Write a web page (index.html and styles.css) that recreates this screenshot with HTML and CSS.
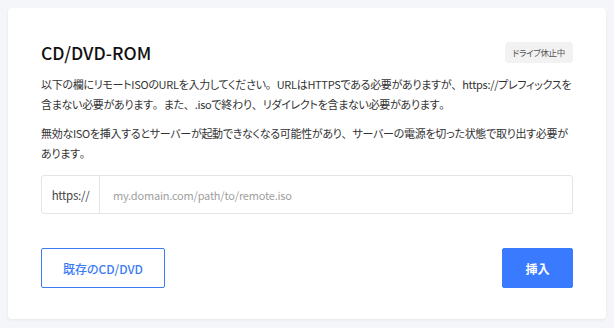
FILE: index.html
```html
<!DOCTYPE html>
<html lang="ja">
<head>
<meta charset="utf-8">
<link rel="stylesheet" href="styles.css">
</head>
<body>
<div class="card">
  <div class="header">
    <h2 class="title">CD/DVD-ROM</h2>
    <span class="badge">ドライブ休止中</span>
  </div>
  <p class="text">以下の欄にリモートISOのURLを入力してください<span class="fw">。</span>URLはHTTPSである必要がありますが<span class="fw">、</span>https://プレフィックスを含まない必要があります<span class="fw">。</span>また<span class="fw">、</span>.isoで終わり<span class="fw">、</span>リダイレクトを含まない必要があります<span class="fw">。</span></p>
  <p class="text">無効なISOを挿入するとサーバーが起動できなくなる可能性があり<span class="fw">、</span>サーバーの電源を切った状態で取り出す必要があります<span class="fw">。</span></p>
  <div class="input-group">
    <span class="prefix">https://</span>
    <input class="input" type="text" placeholder="my.domain.com/path/to/remote.iso">
  </div>
  <div class="actions">
    <button class="btn btn-outline">既存のCD/DVD</button>
    <button class="btn btn-primary">挿入</button>
  </div>
</div>
</body>
</html>
```
FILE: styles.css
```css
* { box-sizing: border-box; }
html, body { margin: 0; }
body {
  background: #f5f6fa;
  padding: 8px;
  font-family: "Noto Sans CJK JP", "Noto Sans", sans-serif;
  font-feature-settings: "palt";
  color: #222;
}
.card {
  background: #fff;
  border-radius: 4px;
  box-shadow: 0 1px 3px rgba(0,0,0,0.07);
  padding: 33px 33px 32px 33px;
  height: 311px;
}
.header {
  display: flex;
  justify-content: space-between;
  align-items: center;
  height: 22px;
  margin-bottom: 12px;
}
.title {
  margin: 0;
  font-size: 17.5px;
  font-weight: 500;
  color: #111;
  letter-spacing: 0;
}
.badge {
  background: #f2f2f2;
  color: #555;
  font-size: 8.5px;
  border-radius: 4px;
  padding: 0 8px;
  height: 21px;
  line-height: 21px;
  letter-spacing: -0.3px;
}
.text {
  margin: 0 0 10px 0;
  font-size: 11px;
  line-height: 19.5px;
  color: #333;
  letter-spacing: -0.3px;
}
.fw { font-feature-settings: normal; letter-spacing: 0; }
.input-group {
  display: flex;
  height: 39px;
  border: 1px solid #e4e4e4;
  border-radius: 3px;
  margin-top: 12px;
}
.prefix {
  width: 58px;
  border-right: 1px solid #e4e4e4;
  display: flex;
  align-items: center;
  justify-content: center;
  font-size: 11.5px;
  color: #444;
  letter-spacing: -0.3px;
}
.input {
  flex: 1;
  border: 0;
  outline: 0;
  padding: 0 13px;
  font-family: inherit;
  font-size: 11px;
  color: #333;
  background: transparent;
  letter-spacing: -0.2px;
}
.input::placeholder { color: #a0a0a0; }
.actions {
  display: flex;
  justify-content: space-between;
  margin-top: 34px;
}
.btn {
  height: 40px;
  font-family: inherit;
  font-feature-settings: "palt";
  font-size: 12px;
  font-weight: 500;
  border-radius: 2px;
  cursor: pointer;
}
.btn-outline {
  width: 124px;
  background: #fff;
  border: 1px solid #3b7bf6;
  color: #3b7bf6;
}
.btn-primary {
  width: 71px;
  background: #3a7afe;
  border: 1px solid #3a7afe;
  color: #fff;
  font-weight: 600;
}
```
